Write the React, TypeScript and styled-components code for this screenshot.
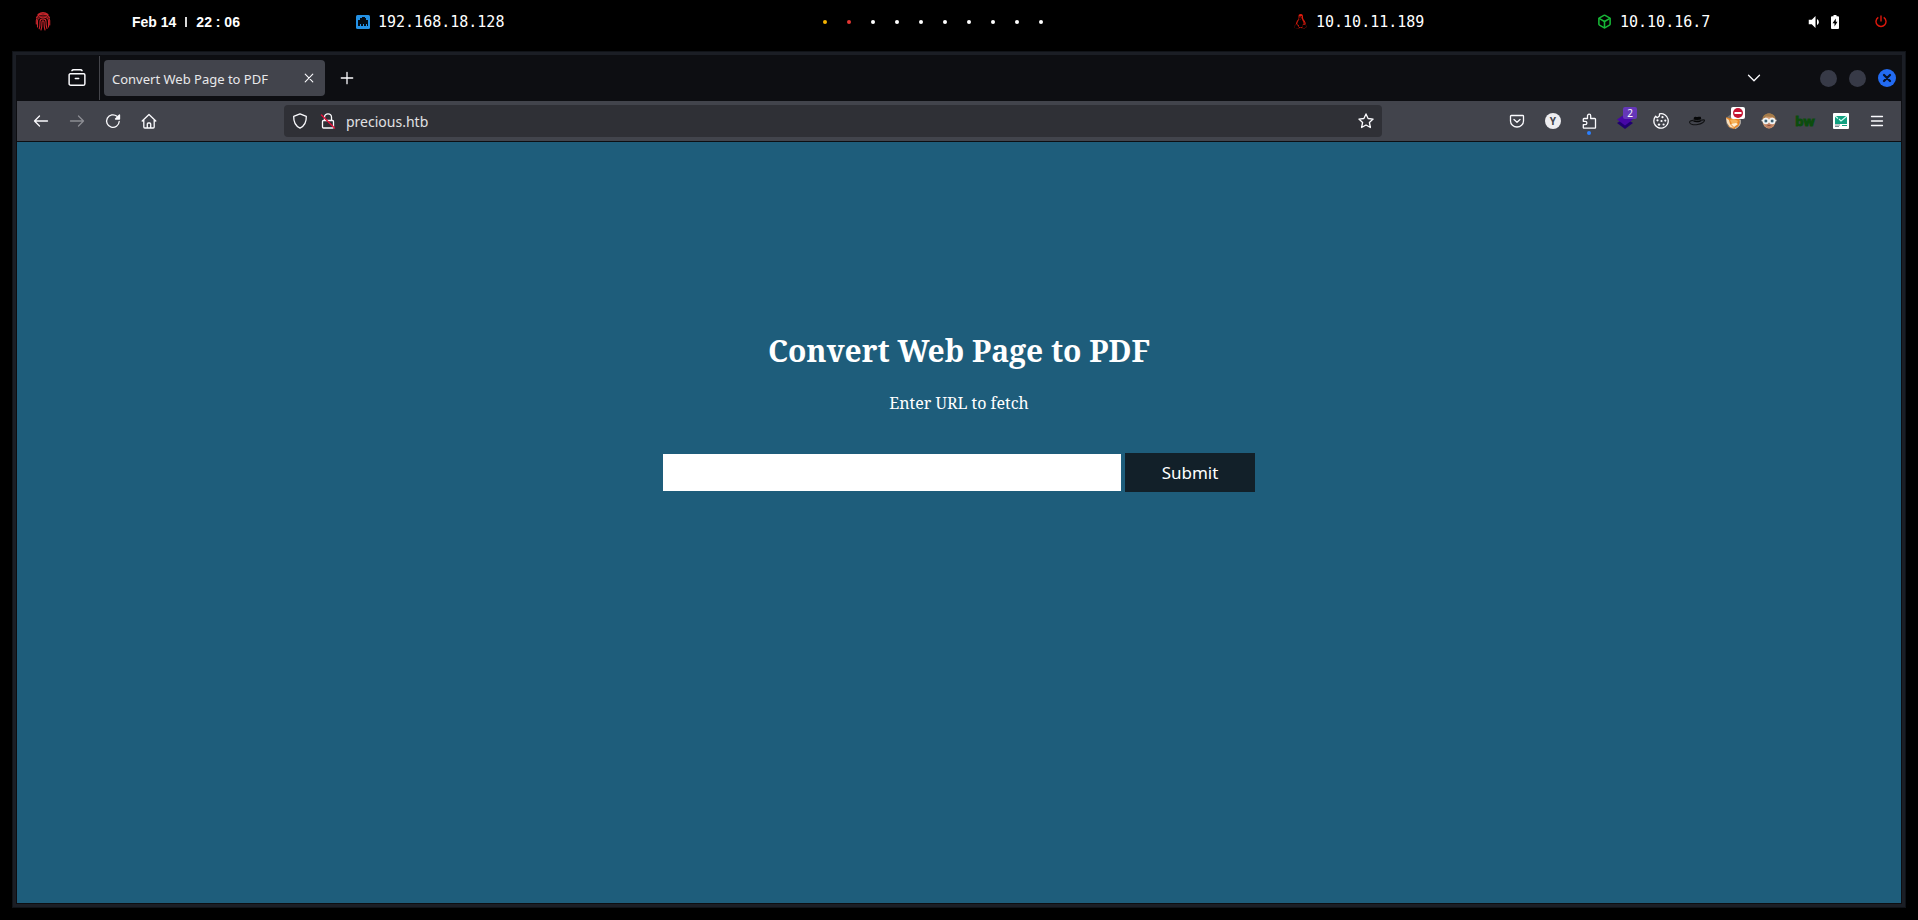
import React from "react";
import styled, { createGlobalStyle, css } from "styled-components";
import { Box } from "lucide-react";
import { FaLinux } from "react-icons/fa";
import { MdVolumeDown } from "react-icons/md";

const GlobalStyle = createGlobalStyle`
  *, *::before, *::after { box-sizing: border-box; }
  body {
    margin: 0;
    background: #000;
    font-family: "Noto Sans", sans-serif;
  }
  button { font: inherit; color: inherit; cursor: pointer; }
`;

const Desktop = styled.div`
  display: flex;
  flex-direction: column;
  min-height: 100vh;
  padding: 0 12px 12px;
  background: #000;
`;

const StatusBar = styled.header`
  display: grid;
  grid-template-columns: 132fr 223fr 468fr 470fr 304fr 208fr 70fr 43fr;
  align-items: center;
  height: 51px;
  margin: 0 -12px;
  padding-bottom: 8px;
  color: #fff;
`;

const StatusCell = styled.div<{ $indent?: number }>`
  display: flex;
  align-items: center;
  gap: 8px;
  padding-left: ${(p) => p.$indent ?? 0}px;
  white-space: nowrap;
`;

const Clock = styled.time`
  display: flex;
  align-items: center;
  gap: 9px;
  font: bold 14px/20px "Liberation Sans", sans-serif;
`;

const ClockDivider = styled.span`
  width: 2px;
  height: 10px;
  background: #d8d8d8;
`;

const Address = styled.span`
  font: 15px/20px "DejaVu Sans Mono", monospace;
`;

const Workspaces = styled.nav`
  display: flex;
  gap: 20px;
`;

const Workspace = styled.button<{ $color: string }>`
  width: 4px;
  height: 4px;
  padding: 0;
  border: 0;
  border-radius: 2px;
  background: ${(p) => p.$color};
`;

const PlainButton = styled.button`
  display: flex;
  align-items: center;
  justify-content: center;
  padding: 0;
  border: 0;
  background: none;
`;

const BrowserWindow = styled.section`
  display: flex;
  flex: 1;
  flex-direction: column;
  border: 4px solid #1b1e25;
  outline: 1px solid #101318;
  outline-offset: -1px;
  padding: 0 1px 1px;
  background: #0d0e12;
`;

const TabStrip = styled.div`
  display: flex;
  align-items: center;
  height: 46px;
  color: #fbfbfe;
`;

const RecentTabs = styled(PlainButton)`
  width: 44px;
  height: 44px;
  margin-left: 38px;
`;

const StripDivider = styled.span`
  width: 1px;
  height: 44px;
  margin-right: 4px;
  background: #44454b;
`;

const Tab = styled.div`
  display: flex;
  align-items: center;
  justify-content: space-between;
  width: 221px;
  height: 36px;
  padding: 0 8px;
  border-radius: 4px;
  background: #42444c;
  font-size: 13px;
  line-height: 20px;
`;

const TabTitle = styled.span`
  padding-top: 2px;
  color: #e8e8ea;
`;

const TabClose = styled(PlainButton)`
  width: 16px;
  height: 16px;
`;

const NewTab = styled(PlainButton)`
  width: 36px;
  height: 36px;
  margin-left: 4px;
`;

const TabList = styled(PlainButton)`
  width: 36px;
  height: 36px;
  margin: 0 48px 0 auto;
`;

const WindowControls = styled.div`
  display: flex;
  align-items: center;
  gap: 12px;
  padding-right: 5px;
`;

const WindowControl = styled(PlainButton)<{ $close?: boolean }>`
  width: 17px;
  height: 17px;
  border-radius: 50%;
  background: #373a47;
  ${(p) =>
    p.$close &&
    css`
      width: 18px;
      height: 18px;
      background: #226bf2;
      color: #06132c;
    `}
`;

const Toolbar = styled.div`
  display: flex;
  align-items: center;
  height: 40px;
  padding: 0 6px;
  background: #42444c;
  color: #fbfbfe;
`;

const ToolGroup = styled.div`
  display: flex;
`;

const ToolButton = styled(PlainButton)`
  position: relative;
  width: 36px;
  height: 32px;

  &:disabled { opacity: 0.4; }
`;

const ToolbarSpace = styled.span`
  flex: 0 1 117px;
`;

const UrlBar = styled.div`
  display: flex;
  flex: 1;
  align-items: center;
  height: 32px;
  padding: 0 2px;
  border-radius: 4px;
  background: #2f3036;
`;

const UrlButton = styled(PlainButton)`
  width: 28px;
  height: 32px;
`;

const UrlInput = styled.input`
  flex: 1;
  min-width: 0;
  height: 32px;
  padding: 0 4px;
  border: 0;
  outline: 0;
  background: none;
  color: #e0e0e3;
  font: 14px/20px "Noto Sans", sans-serif;
`;

const CountBadge = styled.span`
  position: absolute;
  top: 2px;
  right: 6px;
  width: 14px;
  height: 12px;
  border-radius: 2px;
  background: #6537b8;
  font-size: 10px;
  line-height: 12px;
  text-align: center;
`;

const AlertDot = styled.span`
  position: absolute;
  bottom: 2px;
  left: 16px;
  width: 4px;
  height: 4px;
  border-radius: 50%;
  background: #2a80ff;
`;

const BlockBadge = styled.span`
  position: absolute;
  top: 2px;
  right: 6px;
  display: flex;
  align-items: center;
  justify-content: center;
  width: 14px;
  height: 12px;
  border-radius: 2px;
  background: #fff;
`;

const LetterBadge = styled.span`
  width: 16px;
  height: 16px;
  border-radius: 50%;
  background: #ededf0;
  color: #42444c;
  font: bold 10px/16px "Noto Sans", sans-serif;
`;

const Wordmark = styled.span`
  color: #0b4d0d;
  font: bold 13px/16px "Open Sans", sans-serif;
  -webkit-text-stroke: 1px #0b4d0d;
`;

const Page = styled.main`
  display: flex;
  flex: 1;
  flex-direction: column;
  align-items: center;
  margin-top: 1px;
  padding-top: 185px;
  background: #1e5d7b;
  color: #fff;
  text-align: center;
`;

const Title = styled.h1`
  margin: 0;
  font: bold 30px/48px "Noto Serif", "Liberation Serif", serif;
`;

const FetchForm = styled.form`
  display: flex;
  flex-direction: column;
  align-items: center;
`;

const Prompt = styled.label`
  margin: 16px 0 38px;
  font: 16px/24px "Noto Serif", "Liberation Serif", serif;
`;

const FormRow = styled.div`
  display: flex;
  align-items: center;
  gap: 4px;
`;

const TargetInput = styled.input`
  width: 458px;
  height: 37px;
  padding: 8px;
  border: 0;
  background: #fff;
  font: 16px/20px "Noto Sans", sans-serif;
`;

const SubmitButton = styled.button`
  width: 130px;
  height: 39px;
  padding: 0;
  border: 0;
  background: #122029;
  color: #fff;
  font: 17px/24px "Noto Sans", sans-serif;
`;

type GlyphProps = { children: React.ReactNode; size?: number; weight?: number };

const Glyph = ({ children, size = 16, weight = 1.3 }: GlyphProps) => (
  <svg
    width={size}
    height={size}
    viewBox="0 0 16 16"
    fill="none"
    stroke="currentColor"
    strokeWidth={weight}
    strokeLinecap="round"
    strokeLinejoin="round"
    aria-hidden="true"
  >
    {children}
  </svg>
);

const FingerprintIcon = () => (
  <svg
    width="16"
    height="19"
    viewBox="0 0 16 19"
    fill="none"
    stroke="#c9252b"
    strokeWidth="1.1"
    strokeLinecap="round"
    aria-hidden="true"
  >
    <path d="M3 2.500C6 .3 10 .3 13 2.500M1.500 5.500c3-4.500 10-4.500 13 0" />
    <path d="M1.300 12V8.500c0-6 13.400-6 13.400 0V13" />
    <path d="M2.500 15V9c0-5 11-5 11 0v6" />
    <path d="M4.200 16.800c.8-2 .8-4 .8-7.300 0-3.500 6-3.500 6 0 0 3 .2 5 1 7" />
    <path d="M6 18c1-3 1-5 1-8.300 0-1.300 2-1.300 2 0 0 3 0 5.300 1 8.300" />
  </svg>
);

const EthernetIcon = () => (
  <svg width="14" height="14" viewBox="0 0 14 14" aria-hidden="true">
    <rect width="14" height="14" rx="1.5" fill="#2492e6" />
    <path d="M2 11V5h2V3h2V2h3v1h1v2h2v6h-1V9h-1v2H8V9H7v2H5V9H4v2z" fill="#030b14" />
  </svg>
);

const BatteryIcon = () => (
  <svg width="8" height="14" viewBox="0 0 8 14" aria-hidden="true">
    <path d="M2.500 0h3v1.200H7a1 1 0 0 1 1 1V13a1 1 0 0 1-1 1H1a1 1 0 0 1-1-1V2.200a1 1 0 0 1 1-1h1.500z" fill="#fff" />
    <path d="M4.800 3.500L1.500 8.200h2v3.300l3-4.700h-1.700z" fill="#000" />
  </svg>
);

const PowerIcon = () => (
  <svg width="12" height="13" viewBox="0 0 12 13" fill="none" stroke="#e0180c" strokeWidth="1.4" aria-hidden="true">
    <path d="M6 .5v6M3.300 2.300a5 5 0 1 0 5.400 0" />
  </svg>
);

const FoxProxyIcon = () => (
  <svg width="17" height="17" viewBox="0 0 17 17" aria-hidden="true">
    <circle cx="8.5" cy="8.5" r="7.5" fill="#77726d" />
    <path d="M1 4l4 1.500 5-2.500 5 4-1 6-5 3-5-2z" fill="#e98725" />
    <path d="M1 5l3 2 1 4 4 4-4-1-3-4z" fill="#f7dfbd" />
    <path d="M5 7l4-1 4 2-2 4-4-1z" fill="#f6b35b" />
    <path d="M6 11l5-1 2 1-4 3z" fill="#fff0d4" />
    <path d="M15 7c1 4-1 7-5 8.500" fill="none" stroke="#c9c5bd" />
  </svg>
);

const AvatarIcon = () => (
  <svg width="16" height="16" viewBox="0 0 16 16" aria-hidden="true">
    <ellipse cx="8" cy="8" rx="6.5" ry="7.5" fill="#d19a70" />
    <path d="M1.500 7C1 3 4 .5 8 .5S15 3 14.500 7L12 4 5 3.500z" fill="#a47b49" />
    <path d="M3 10h10l-2 4-3 1.500L5 14z" fill="#bd8062" />
    <path d="M.5 7.500h15" stroke="#e8e4df" strokeWidth="1.5" />
    <circle cx="4.8" cy="8" r="2.5" fill="#7fa5b5" stroke="#f4f4f4" strokeWidth="1.5" />
    <circle cx="11.2" cy="8" r="2.5" fill="#7fa5b5" stroke="#f4f4f4" strokeWidth="1.5" />
    <circle cx="5" cy="8" r="1" fill="#29485a" />
    <circle cx="11" cy="8" r="1" fill="#29485a" />
    <path d="M6.500 12.500h3" stroke="#8a4f43" />
  </svg>
);

const HatIcon = () => (
  <svg width="16" height="12" viewBox="0 0 16 12" aria-hidden="true">
    <path
      d="M4.300 6.500L4.900 2.400C6 1 7.500 2 8.500 1.900c1.300-.1 2.600-.6 3.300.2l.9 3.900c-2 1.400-6 1.800-8.400.5z"
      fill="#060708"
    />
    <path
      d="M4.300 5.400C2 5.500.4 6.400.6 7.500c.4 1.800 4 2.800 8 2 4-.7 7-2.800 6.900-4.200 0-.6-1.300-.5-2.800-.2"
      fill="none"
      stroke="#111214"
      strokeWidth="1.1"
    />
    <path d="M4.600 4.800c2 1 5.500.9 7.700-.3" fill="none" stroke="#4b4d53" strokeWidth=".6" />
  </svg>
);

const MailCheckIcon = () => (
  <svg width="16" height="16" viewBox="0 0 16 16" aria-hidden="true">
    <rect width="16" height="16" rx="1" fill="#fff" />
    <path d="M2 3h12v8H2z" fill="#12a181" />
    <path d="M2 3l3 2.500M14 3l-6 5-2-2" fill="none" stroke="#d8fff3" strokeWidth="1.1" />
    <path d="M2 12h5M2 13.500h4" stroke="#7a8d91" />
    <path d="M9 12.500h5" stroke="#12a181" />
  </svg>
);

const workspaceColors = ["#f5b301", "#e53632", ...Array<string>(8).fill("#fff")];

const extensions: { name: string; icon: React.ReactNode }[] = [
  {
    name: "Save to Pocket",
    icon: (
      <Glyph>
        <path d="M2.300 2.500h11.400a.8.8 0 0 1 .8.8V8c0 3.500-3 6-6.500 6S1.500 11.500 1.500 8V3.300a.8.8 0 0 1 .8-.8zM5 6.500l3 2.700 3-2.700" />
      </Glyph>
    ),
  },
  { name: "Account", icon: <LetterBadge>Y</LetterBadge> },
  {
    name: "Extensions",
    icon: (
      <>
        <Glyph>
          <path d="M3 5.500h3.500V2.800a1.600 1.600 0 0 1 3.200 0v2.700h4.100a.7.7 0 0 1 .7.7v8.300a.7.7 0 0 1-.7.7H3a.7.7 0 0 1-.7-.7v-2.800h1.900a1.700 1.700 0 0 0 0-3.400H2.300V6.200a.7.7 0 0 1 .7-.7z" />
        </Glyph>
        <AlertDot />
      </>
    ),
  },
  {
    name: "Layers",
    icon: (
      <>
        <svg width="18" height="18" viewBox="0 0 18 18" aria-hidden="true">
          <path d="M1 11l8-5 8 5-8 6z" fill="#200071" />
          <path d="M1 7.500L9 2l8 5.500-8 6z" fill="#4707a6" />
        </svg>
        <CountBadge>2</CountBadge>
      </>
    ),
  },
  {
    name: "Cookies",
    icon: (
      <Glyph>
        <path d="M6.500.9a7.200 7.200 0 1 1-5.300 9.300C.3 7 1.200 4.800 2.600 3.200l1.600 1.500L6.400 3z" />
        <g fill="currentColor" stroke="none">
          <circle cx="9.5" cy="4.2" r="1.1" />
          <circle cx="4.5" cy="7.3" r="1.1" />
          <circle cx="8.5" cy="8" r="1.1" />
          <circle cx="12.3" cy="7.6" r="1.1" />
          <circle cx="6" cy="11.6" r="1.2" />
          <circle cx="10.6" cy="11.5" r="1.1" />
        </g>
      </Glyph>
    ),
  },
  { name: "Black hat", icon: <HatIcon /> },
  {
    name: "Proxy",
    icon: (
      <>
        <FoxProxyIcon />
        <BlockBadge>
          <svg width="10" height="10" viewBox="0 0 10 10" aria-hidden="true">
            <circle cx="5" cy="5" r="5" fill="#c41432" />
            <path d="M1.500 5h7" stroke="#fff" strokeWidth="2" />
          </svg>
        </BlockBadge>
      </>
    ),
  },
  { name: "Profile", icon: <AvatarIcon /> },
  { name: "BuiltWith", icon: <Wordmark>bw</Wordmark> },
  { name: "Mail check", icon: <MailCheckIcon /> },
  {
    name: "Menu",
    icon: (
      <Glyph>
        <path d="M2.500 3.500h11M2.500 8h11M2.500 12.500h11" />
      </Glyph>
    ),
  },
];

export default function App() {
  return (
    <>
      <GlobalStyle />
      <Desktop>
        <StatusBar>
          <StatusCell $indent={35}>
            <FingerprintIcon />
          </StatusCell>
          <StatusCell>
            <Clock>
              <span>Feb 14</span>
              <ClockDivider />
              <span>22 : 06</span>
            </Clock>
          </StatusCell>
          <StatusCell $indent={1}>
            <EthernetIcon />
            <Address>192.168.18.128</Address>
          </StatusCell>
          <Workspaces aria-label="Workspaces">
            {workspaceColors.map((color, i) => (
              <Workspace key={i} $color={color} aria-label={`Workspace ${i + 1}`} />
            ))}
          </Workspaces>
          <StatusCell>
            <FaLinux size={15} color="#e01b0c" />
            <Address>10.10.11.189</Address>
          </StatusCell>
          <StatusCell>
            <Box size={15} color="#17b636" strokeWidth={2.5} />
            <Address>10.10.16.7</Address>
          </StatusCell>
          <StatusCell>
            <MdVolumeDown size={18} />
            <BatteryIcon />
          </StatusCell>
          <StatusCell>
            <PlainButton aria-label="Power">
              <PowerIcon />
            </PlainButton>
          </StatusCell>
        </StatusBar>

        <BrowserWindow>
          <TabStrip>
            <RecentTabs aria-label="Recent browsing">
              <Glyph size={18}>
                <path d="M3.500 1.500c.3-.6.800-.8 1.500-.8h6c.7 0 1.200.2 1.500.8M2 4.300h12a1 1 0 0 1 1 1V13a1.500 1.500 0 0 1-1.500 1.500h-11A1.500 1.500 0 0 1 1 13V5.300a1 1 0 0 1 1-1zM6.500 8.500h3" />
              </Glyph>
            </RecentTabs>
            <StripDivider />
            <Tab>
              <TabTitle>Convert Web Page to PDF</TabTitle>
              <TabClose aria-label="Close tab">
                <Glyph weight={1.1}>
                  <path d="M4.200 4.200l7.600 7.600M11.800 4.200l-7.600 7.600" />
                </Glyph>
              </TabClose>
            </Tab>
            <NewTab aria-label="New tab">
              <Glyph>
                <path d="M8 2.300v11.400M2.300 8h11.400" />
              </Glyph>
            </NewTab>
            <TabList aria-label="List all tabs">
              <Glyph>
                <path d="M2.500 5.200L8 10.700l5.500-5.500" />
              </Glyph>
            </TabList>
            <WindowControls>
              <WindowControl aria-label="Minimize" />
              <WindowControl aria-label="Maximize" />
              <WindowControl $close aria-label="Close window">
                <Glyph size={12} weight={3}>
                  <path d="M4 4l8 8M12 4l-8 8" />
                </Glyph>
              </WindowControl>
            </WindowControls>
          </TabStrip>

          <Toolbar>
            <ToolGroup>
              <ToolButton aria-label="Back">
                <Glyph>
                  <path d="M14.500 8H1.500M6.500 3l-5 5 5 5" />
                </Glyph>
              </ToolButton>
              <ToolButton aria-label="Forward" disabled>
                <Glyph>
                  <path d="M1.500 8h13M9.500 3l5 5-5 5" />
                </Glyph>
              </ToolButton>
              <ToolButton aria-label="Reload">
                <Glyph>
                  <path d="M14.200 8.500A6.300 6.300 0 1 1 12 3.300" />
                  <path d="M14.500 2v4h-4z" fill="currentColor" />
                </Glyph>
              </ToolButton>
              <ToolButton aria-label="Home">
                <Glyph>
                  <path d="M1.200 8L8 1.500 14.800 8M2.800 7v7a1 1 0 0 0 1 1h8.400a1 1 0 0 0 1-1V7M6.300 15v-4a1 1 0 0 1 1-1h1.400a1 1 0 0 1 1 1v4" />
                </Glyph>
              </ToolButton>
            </ToolGroup>
            <ToolbarSpace />
            <UrlBar>
              <UrlButton aria-label="Tracking protection">
                <Glyph>
                  <path d="M8 .9l6.300 2.400c.2 5.200-1.500 9.600-6.300 11.800C3.200 12.900 1.500 8.500 1.700 3.300z" />
                </Glyph>
              </UrlButton>
              <UrlButton aria-label="Connection is not secure">
                <Glyph>
                  <path d="M4.500 7.500V4.300a3.500 3.500 0 0 1 7 0v3.200M3.500 7.500h9a1 1 0 0 1 1 1V14a1 1 0 0 1-1 1h-9a1 1 0 0 1-1-1V8.500a1 1 0 0 1 1-1z" />
                  <path d="M1.500 2l13 13" stroke="#e2143c" strokeWidth="1.5" />
                </Glyph>
              </UrlButton>
              <UrlInput aria-label="Address" defaultValue="precious.htb" />
              <UrlButton aria-label="Bookmark this page">
                <Glyph>
                  <path d="M8 .9l2.100 4.600 5 .6-3.700 3.400 1 5L8 12l-4.400 2.500 1-5L.9 6.100l5-.6z" />
                </Glyph>
              </UrlButton>
            </UrlBar>
            <ToolbarSpace />
            <ToolGroup>
              {extensions.map(({ name, icon }) => (
                <ToolButton key={name} aria-label={name}>
                  {icon}
                </ToolButton>
              ))}
            </ToolGroup>
          </Toolbar>

          <Page>
            <Title>Convert Web Page to PDF</Title>
            <FetchForm onSubmit={(e) => e.preventDefault()}>
              <Prompt htmlFor="target-url">Enter URL to fetch</Prompt>
              <FormRow>
                <TargetInput id="target-url" type="text" />
                <SubmitButton type="submit">Submit</SubmitButton>
              </FormRow>
            </FetchForm>
          </Page>
        </BrowserWindow>
      </Desktop>
    </>
  );
}
